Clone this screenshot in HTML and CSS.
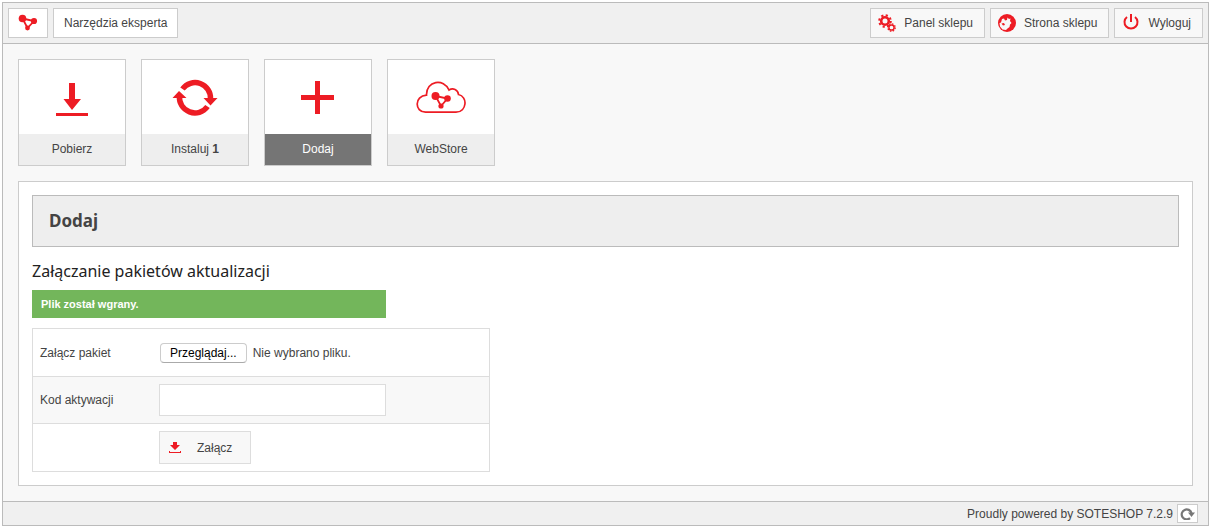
FILE: index.html
```html
<!DOCTYPE html>
<html lang="pl">
<head>
  <meta charset="UTF-8">
  <meta name="viewport" content="width=device-width, initial-scale=1">
  <title>Dodaj - Narzędzia eksperta</title>
  <link rel="stylesheet" href="styles.css">
</head>
<body>
<div class="frame">
  <header class="topbar">
    <a href="#" class="box logo" aria-label="SOTESHOP">
      <svg width="20" height="18" viewBox="0 0 20 18">
        <path d="M4.5 4.5L16 7L9.500 14Z" fill="none" stroke="#ed1c24" stroke-width="1.800"/>
        <g fill="#ed1c24"><circle cx="4.500" cy="4.500" r="3.800"/><circle cx="16" cy="7" r="3.100"/><circle cx="9.500" cy="14" r="2.400"/></g>
      </svg>
    </a>
    <a href="#" class="box">Narzędzia eksperta</a>
    <nav class="user-menu">
      <a href="#" class="box box-icon">
        <svg width="18" height="18" viewBox="0 0 18 18" fill="none" stroke="#ed1c24">
          <circle cx="7" cy="7" r="3.800" stroke-width="2.600"/>
          <circle cx="7" cy="7" r="5.800" stroke-width="2" stroke-dasharray="2.200 2.355"/>
          <circle cx="13.500" cy="13.500" r="2.600" stroke-width="1.500"/>
          <circle cx="13.500" cy="13.500" r="3.700" stroke-width="1.400" stroke-dasharray="1.500 1.406"/>
        </svg>
        Panel sklepu
      </a>
      <a href="#" class="box box-icon">
        <svg width="18" height="18" viewBox="0 0 18 18">
          <circle cx="9" cy="9" r="9" fill="#ed1c24"/>
          <path d="M1.500 9L3 8.500L4 5L6 4.500L7 6.500L9 6L9.500 3.500L11 5L12.500 4.500L12 7L13.500 9L12 10.500L11.500 13L9.500 14.500L8 16L4.500 15.500L2 12.500Z" fill="#f8f8f8"/>
          <path d="M3.500 9.500L6 9L7 11L5 11.500Z" fill="#ed1c24"/>
        </svg>
        Strona sklepu
      </a>
      <a href="#" class="box box-icon">
        <svg width="18" height="18" viewBox="0 0 18 18" fill="none" stroke="#ed1c24" stroke-width="2">
          <path d="M5 3A6.500 6.500 0 1 0 13 3M9 0V8"/>
        </svg>
        Wyloguj
      </a>
    </nav>
  </header>

  <main>
    <nav class="tiles">
      <a href="#" class="tile">
        <span class="tile-icon">
          <svg width="50" height="50" viewBox="0 0 50 50" fill="#ed1c24"><path d="M22 11H28V27H34L25 38L16.500 27H22ZM9 41H41V44H9Z"/></svg>
        </span>
        <span class="tile-label">Pobierz</span>
      </a>
      <a href="#" class="tile">
        <span class="tile-icon">
          <svg width="50" height="50" viewBox="0 0 50 50">
            <path d="M12.500 17A15.500 15.500 0 0 1 40.500 27M37.500 34.500A15.500 15.500 0 0 1 9.500 24" fill="none" stroke="#ed1c24" stroke-width="5.500"/>
            <path d="M33.500 26H47.500L40.500 33.500ZM2.500 26H16.500L9 19Z" fill="#ed1c24"/>
          </svg>
        </span>
        <span class="tile-label">Instaluj <b>1</b></span>
      </a>
      <a href="#" class="tile active">
        <span class="tile-icon">
          <svg width="50" height="50" viewBox="0 0 50 50" fill="#ed1c24"><path d="M22 9H27V23H41V28H27V42H22V28H8V23H22Z"/></svg>
        </span>
        <span class="tile-label">Dodaj</span>
      </a>
      <a href="#" class="tile">
        <span class="tile-icon">
          <svg width="50" height="50" viewBox="0 0 50 50">
            <path d="M9.500 40.200H40C51 40 52 24.500 42.500 22.500C42 17.500 37 15.500 33 18C28 6 10 8.500 10.500 23.200C-2 24 -1.500 40 9.500 40.200Z" fill="none" stroke="#ed1c24" stroke-width="1.700"/>
            <path d="M19.500 24L31.500 26.500L25 34Z" fill="none" stroke="#ed1c24" stroke-width="1.800"/>
            <g fill="#ed1c24"><circle cx="19.500" cy="24" r="4"/><circle cx="31.500" cy="26.500" r="3.300"/><circle cx="25" cy="34" r="2.600"/></g>
          </svg>
        </span>
        <span class="tile-label">WebStore</span>
      </a>
    </nav>

    <section class="panel">
      <h1>Dodaj</h1>
      <h2>Załączanie pakietów aktualizacji</h2>
      <p class="message">Plik został wgrany.</p>

      <form class="upload">
        <div class="row">
          <label for="package">Załącz pakiet</label>
          <div class="field">
            <input type="file" id="package" class="file-input">
            <label for="package" class="file-btn">Przeglądaj...</label>
            <span>Nie wybrano pliku.</span>
          </div>
        </div>
        <div class="row">
          <label for="code">Kod aktywacji</label>
          <div class="field"><input type="text" id="code" class="text-input"></div>
        </div>
        <div class="row">
          <span></span>
          <div class="field">
            <button type="submit" class="submit">
              <svg width="12" height="12" viewBox="0 0 12 12" fill="#ed1c24"><path d="M4 0H8V3H11L6 8L1 3H4ZM0 9H1V10H11V9H12V11H0Z"/></svg>
              Załącz
            </button>
          </div>
        </div>
      </form>
    </section>
  </main>

  <footer>
    <span>Proudly powered by SOTESHOP 7.2.9</span>
    <button type="button" class="refresh" aria-label="Odśwież">
      <svg width="15" height="13" viewBox="0 0 15 13"><path d="M10 11.200A5 5 0 1 1 11.500 6" fill="none" stroke="#777" stroke-width="2.200"/><path d="M8 5.500H15L11.500 10Z" fill="#777"/></svg>
    </button>
  </footer>
</div>
</body>
</html>
```
FILE: styles.css
```css
* {
  box-sizing: border-box;
}
body {
  margin: 0;
  padding: 2px;
  background: #fff;
  color: #444;
  font: 12px/16px "Liberation Sans", Arial, sans-serif;
}
a {
  color: inherit;
  text-decoration: none;
}
svg {
  display: block;
  flex: none;
}
.frame {
  display: flex;
  flex-direction: column;
  min-height: calc(100vh - 4px);
  border: 1px solid #bbb;
  background: #f8f8f8;
}

/* top bar */
.topbar {
  display: flex;
  gap: 5px;
  padding: 5px;
  border-bottom: 1px solid #bbb;
  background: #f0f0f0;
}
.box {
  display: flex;
  align-items: center;
  height: 30px;
  padding: 0 10px;
  border: 1px solid #ccc;
  background: #fff;
}
.logo {
  padding: 0 9px;
}
.user-menu {
  display: flex;
  gap: 5px;
  margin-left: auto;
}
.box-icon {
  gap: 8px;
  padding: 0 11px 0 7px;
  background: #f8f8f8;
}

/* main navigation */
main {
  flex: 1;
  padding: 15px;
}
.tiles {
  display: flex;
  flex-wrap: wrap;
  gap: 15px;
}
.tile {
  width: 108px;
  border: 1px solid #ccc;
  background: #fff;
}
.tile-icon {
  display: flex;
  align-items: center;
  justify-content: center;
  height: 74px;
}
.tile-label {
  display: block;
  background: #eee;
  line-height: 31px;
  text-align: center;
}
.active .tile-label {
  background: #757575;
  color: #fff;
}

/* content */
.panel {
  margin-top: 15px;
  padding: 13px;
  border: 1px solid #ccc;
  background: #fff;
}
h1 {
  margin: 0;
  padding: 0 16px;
  border: 1px solid #bbb;
  background: #eee;
  font: bold 17px/50px "Noto Sans", sans-serif;
}
h2 {
  margin: 14px 0 8px;
  color: #222;
  font: 16px/21px "Noto Sans", sans-serif;
}
.message {
  max-width: 354px;
  margin: 0 0 10px;
  padding: 0 9px;
  background: #73b65b;
  color: #fff;
  font-size: 11px;
  font-weight: bold;
  line-height: 28px;
}
.upload {
  max-width: 458px;
  border: 1px solid #ddd;
}
.row {
  display: grid;
  grid-template-columns: 112px 1fr;
  gap: 7px;
  align-items: center;
  min-height: 47px;
  padding: 7px;
}
.row + .row {
  border-top: 1px solid #ddd;
}
.row:nth-child(even) {
  background: #f8f8f8;
}
.field {
  display: flex;
  align-items: center;
  gap: 6px;
}
.file-input {
  position: absolute;
  width: 1px;
  height: 1px;
  opacity: 0;
}
.file-btn {
  margin-left: 1px;
  padding: 1px 9px;
  border: 1px solid #ccc;
  border-bottom-color: #aaa;
  border-radius: 4px;
  background: #fff;
  color: #000;
}
.text-input {
  width: 227px;
  height: 32px;
  padding: 0 8px;
  border: 1px solid #ddd;
  background: #fff;
  font: inherit;
}
.submit {
  display: flex;
  align-items: center;
  gap: 16px;
  height: 33px;
  padding: 0 18px 0 9px;
  border: 1px solid #ddd;
  background: #f8f8f8;
  color: #444;
  font: inherit;
}

/* footer */
footer {
  display: flex;
  align-items: center;
  justify-content: flex-end;
  gap: 4px;
  padding: 2px 10px;
  border-top: 1px solid #bbb;
  background: #f0f0f0;
}
.refresh {
  display: flex;
  align-items: center;
  justify-content: center;
  width: 21px;
  height: 19px;
  padding: 0;
  border: 1px solid #ccc;
  background: #fff;
}
```
